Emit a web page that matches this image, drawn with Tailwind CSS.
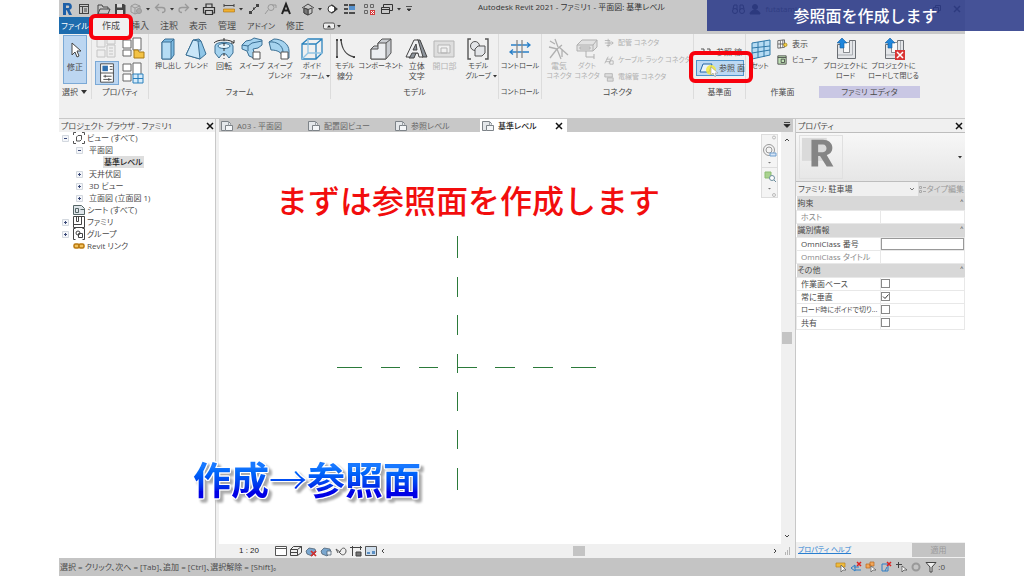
<!DOCTYPE html>
<html lang="ja">
<head>
  <meta charset="UTF-8" />
  <meta name="viewport" content="width=device-width, initial-scale=1.0" />
  <title>Autodesk Revit 2021 - ファミリ1</title>
  <script src="https://cdn.jsdelivr.net/npm/@tailwindcss/browser@4"></script>
</head>
<body class="relative bg-white px-[59px] font-['Open_Sans','Noto_Sans_CJK_JP',sans-serif] [font-feature-settings:'palt'] text-[8px] leading-[10px] text-[#4a4a4a] overflow-x-hidden">

  <!-- shared icons -->
  <svg class="hidden">
    <symbol id="caret" viewBox="0 0 8 8"><path d="M2 3h4L4 5.500z" fill="#333"/></symbol>
    <symbol id="view" viewBox="0 0 12 12"><path d="M4.500 10.500h-4v-9h7l2 2v1" fill="#e4e7ea" stroke="#7d8388"/><path d="M4.500 5.500h7v5h-7z" fill="#f4f6f8" stroke="#7d8388"/><path d="M7.500 1.500v4" fill="none" stroke="#9aa0a5"/></symbol>
    <symbol id="plus" viewBox="0 0 7 7"><path d="M.5.5h6v6h-6z" fill="#f4f6fa" stroke="#d3d8df"/><path d="M2 3.500h3M3.500 2v3" stroke="#3c4a78"/></symbol>
    <symbol id="minus" viewBox="0 0 7 7"><path d="M.5.5h6v6h-6z" fill="#f4f6fa" stroke="#d3d8df"/><path d="M2 3.500h3" stroke="#3c4a78"/></symbol>
    <symbol id="close" viewBox="0 0 8 8"><path d="M1 1l6 6M7 1L1 7" stroke="#111" stroke-width="1.500"/></symbol>
    <symbol id="load" viewBox="0 0 24 24"><path d="M3.500 7.500h6v8h6v-12h6v18h-18z" fill="#e4e6e9" stroke="#6a6e73"/><path d="M9.500 5.500h6v10h-6z" fill="#fafafa" stroke="#8a8e93"/><path d="M18.500 4v14H4" fill="none" stroke="#a9adb2"/><path d="M8 1l5 5h-3v5H6V6H3z" fill="#1f86dc" stroke="#145a9c" stroke-width=".6"/></symbol>
  </svg>

  <div class="flex min-h-screen flex-col bg-[#f0f0f0]">

    <!-- title bar -->
    <header class="relative flex h-[17px] items-center bg-[#c8c8c8]">
      <svg class="size-4" viewBox="0 0 16 16"><path d="M4 2h5.500a3.500 3.500 0 0 1 1 6.800L13 14h-3l-2.200-4.700H7V14H4zM7 4.500v2.500h2a1.200 1.200 0 0 0 0-2.500z" fill="#1d5fa8"/></svg>
      <svg class="ml-px size-4" viewBox="0 0 16 16" fill="none" stroke="#444"><rect x="3.500" y="3.500" width="9" height="9"/><path d="M3.500 5.500h9M6.500 5.500v7M8 8h3M8 10h3"/></svg>
      <svg class="ml-[3px] size-4" viewBox="0 0 16 16" fill="none" stroke="#444"><path d="M3 13V4h4l1 2h5v2M3 13l2-5h10l-2 5z"/></svg>
      <svg class="ml-px size-4" viewBox="0 0 16 16"><path d="M3 3h9l1.500 1.500V13H3z" fill="#444"/><path d="M5 3h5v3.500H5zM5 9h6v4H5z" fill="#ddd"/></svg>
      <svg class="size-4" viewBox="0 0 16 16" fill="none" stroke="#999"><path d="M3 5l4-2 5 2v6l-5 2-4-2zM3 5l4 2 5-2M7 7v6"/><circle cx="11" cy="10" r="2.500" fill="#aaa"/></svg>
      <svg class="size-2"><use href="#caret"/></svg>
      <svg class="size-4" viewBox="0 0 16 16" fill="none" stroke="#999" stroke-width="1.300"><path d="M7 3L3.500 6.500 7 10M4 6.500h6c4 0 4 5 0 5"/></svg>
      <svg class="size-2"><use href="#caret"/></svg>
      <svg class="size-4" viewBox="0 0 16 16" fill="none" stroke="#999" stroke-width="1.300"><path d="M9 3l3.500 3.500L9 10M12 6.500H6c-4 0-4 5 0 5"/></svg>
      <svg class="size-2"><use href="#caret"/></svg>
      <svg class="ml-px size-4" viewBox="0 0 16 16" fill="none" stroke="#333" stroke-width="1.200"><path d="M5 6V3h6v3M4 12H2.500V6.500h11V12H12M4.500 9.500h7v4h-7z"/></svg>
      <svg class="ml-1 size-4" viewBox="0 0 16 16"><path d="M3 4.500h10M3 3v3M13 3v3" stroke="#444" fill="none"/><path d="M2.500 8h11v3h-11z" fill="#f0b030" stroke="#a87010" stroke-width=".6"/></svg>
      <svg class="size-2"><use href="#caret"/></svg>
      <svg class="ml-px size-4" viewBox="0 0 16 16"><path d="M4 12l8-8" stroke="#444" fill="none"/><path d="M3 10h3v3H3zM10 3h3v3h-3zM7 6.500h2v2H7z" fill="#444"/></svg>
      <svg class="size-4" viewBox="0 0 16 16" fill="none" stroke="#999"><path d="M3 13l3-4"/><circle cx="9" cy="6.500" r="3"/><path d="M10 4h4v3"/></svg>
      <svg class="size-4" viewBox="0 0 16 16"><path d="M4 13L8 3l4 10M5.500 9.500h5" stroke="#222" stroke-width="2" fill="none"/></svg>
      <svg class="ml-1.5 size-4" viewBox="0 0 16 16" fill="none" stroke="#444"><path d="M2 7l6-4 6 4M4 7v5l4 2 4-2V7M4 7l4 1.500L12 7M8 8.500V14"/><path d="M4 7l4 1.500V14l-4-2z" fill="#777"/></svg>
      <svg class="size-2"><use href="#caret"/></svg>
      <svg class="size-4" viewBox="0 0 16 16"><circle cx="7.500" cy="8" r="3.500" fill="#fff" stroke="#333"/><path d="M7.500 3L14 8l-6.500 5V11a3 3 0 0 0 0-6z" fill="#333"/></svg>
      <svg class="ml-px size-4" viewBox="0 0 16 16" stroke-width="1.500"><path d="M3 4h4M3 8h4M3 12h4" stroke="#222"/><path d="M8 4h6M8 12h6" stroke="#222"/><path d="M8 8h6M8 6h6" stroke="#2f7fd0"/></svg>
      <svg class="ml-1 size-4" viewBox="0 0 16 16" fill="none" stroke="#666"><path d="M3.500 3.500h3v3h-3zM9.500 3.500h3v3h-3zM3.500 9.500h3v3h-3z"/><path d="M9 9h5v5H9z" fill="#d33b3b" stroke="none"/><path d="M10 10l3 3M13 10l-3 3" stroke="#fff"/></svg>
      <svg class="ml-0.5 size-4" viewBox="0 0 16 16" fill="none" stroke="#333"><path d="M4.500 6V3.500h9v6H11M2.500 6.500h8v6h-8zM2.500 8.500h8"/></svg>
      <svg class="size-2"><use href="#caret"/></svg>
      <svg class="ml-0.5 size-2" viewBox="0 0 8 8"><path d="M1 1.500h6M2 4h4L4 6z" fill="#333" stroke="#333" stroke-width=".8"/></svg>
      <h1 class="ml-[65px] whitespace-nowrap leading-3 pb-1 text-[#333]">Autodesk Revit 2021 - ファミリ1 - 平面図: 基準レベル</h1>
      <div class="absolute right-0 flex items-center gap-1 pr-1 text-[#222]">
        <svg class="h-3 w-8" viewBox="0 0 32 12" fill="none" stroke="#000"><circle cx="6" cy="8" r="2.500"/><circle cx="13" cy="8" r="2.500"/><path d="M4 6l1-4h3v5M15 6l-1-4h-3v5"/><circle cx="26" cy="4" r="2.500" fill="#000"/><path d="M21 11c0-5 10-5 10 0z" fill="#000"/></svg>
        <span>futatami</span>
        <svg class="ml-[132px] size-2" viewBox="0 0 8 8" fill="none" stroke="#000"><path d="M.5 2.500h5v5h-5zM2.500 2V.5h5v5H6"/></svg>
        <svg class="ml-2 size-2"><use href="#close"/></svg>
      </div>
    </header>

    <!-- ribbon tabs -->
    <nav class="flex h-[17px] items-center gap-[11px] bg-[#c8c8c8] whitespace-nowrap text-[9px]">
      <div class="flex h-full items-center">
        <button class="h-full w-8 bg-[#1d6cae] text-[8px] text-white">ファイル</button>
        <button class="relative -mr-[11px] h-full w-10 bg-[#f0f0f0]">作成
          <span class="pointer-events-none absolute -top-[3px] -left-[2px] h-[26px] w-11 rounded-md border-4 border-[#f8000c]"></span>
        </button>
      </div>
      <button>挿入</button>
      <button>注釈</button>
      <button>表示</button>
      <button>管理</button>
      <button class="text-[8px]">アドイン</button>
      <button>修正</button>
      <button class="ml-2 flex items-center" aria-label="リボン表示">
        <svg class="h-2 w-3" viewBox="0 0 12 8"><rect x=".5" y="1" width="11" height="6" rx="1.500" fill="#eee" stroke="#555"/><path d="M4 5.500h4L6 3z" fill="#222"/></svg>
        <svg class="size-2"><use href="#caret"/></svg>
      </button>
    </nav>

    <!-- ribbon -->
    <div class="flex h-[65px] whitespace-nowrap text-center">
      <section class="flex w-[33px] shrink-0 flex-col border-r border-[#dcdcdc]">
        <button class="mx-1 mt-px flex h-[49px] flex-col items-center border border-[#7ba9d6] bg-[#bcd6f1] pt-0.5">
          <svg class="size-6" viewBox="0 0 24 24"><path d="M9 5v12l3-3 2 5 2-1-2-5h4z" fill="#fff" stroke="#444"/></svg>
          <span>修正</span>
        </button>
        <p class="mt-auto mb-px flex h-3 items-center justify-center">選択<svg class="ml-0.5 size-2" viewBox="0 0 8 8"><path d="M1 2h6L4 6z" fill="#333"/></svg></p>
      </section>

      <section class="flex w-[57px] shrink-0 flex-col border-r border-[#dcdcdc]">
        <div class="grid grid-cols-2 justify-items-center gap-y-px px-0.5 pt-0.5">
          <svg class="size-6" viewBox="0 0 24 24" fill="#eee" stroke="#c4c4c4"><path d="M2 3h8v8H2zM12 3h8v5h-8zM2 14h8v7H2z"/><path d="M12 9h8v12h-8zM14 12h4M14 15h4M14 18h4"/></svg>
          <svg class="size-6" viewBox="0 0 24 24" fill="#fff" stroke="#666"><path d="M2 4h8v8H2zM12 2h8v12h-8zM2 14h8v6H2z"/><path d="M13 14h4l1 2h5v6H13z" fill="#f3c244" stroke="#a97a14"/></svg>
          <svg class="size-6 border border-[#7ba9d6] bg-[#bcd6f1]" viewBox="0 0 24 24"><path d="M5 2h14v20H5z" fill="#fff" stroke="#444"/><path d="M7 4h6v6H7z" fill="#2f6fae"/><path d="M15 5h3M15 8h3M5 12h14M8 15.500h9M8 19h9M10 14v3M14 17.500v3" stroke="#444"/></svg>
          <svg class="size-6" viewBox="0 0 24 24" fill="#fff" stroke="#666"><path d="M2 3h8v7H2zM12 2h8v12h-8zM2 13h8v7H2z"/><path d="M12 13h10v9H12zM17 13v9M12 17.500h10" fill="#d5ebfa" stroke="#2a80bd"/></svg>
        </div>
        <p class="mt-auto mb-px h-3 leading-3">プロパティ</p>
      </section>

      <section class="flex w-[182px] shrink-0 flex-col border-r border-[#dcdcdc]">
        <div class="flex pl-[5px] pt-[3px] text-[7px]">
          <button class="flex w-7 flex-col items-center"><svg class="size-6" viewBox="0 0 24 24" stroke="#3a6f94"><path d="M6 5l3-3h9v16l-3 4H6z" fill="#7dbbe3"/><path d="M6 5h9v17H6z" fill="#b5dcf4"/><path d="M15 5l3-3"/></svg>押し出し</button>
          <button class="flex w-7 flex-col items-center"><svg class="size-6" viewBox="0 0 24 24" stroke="#3a6f94"><path d="M9 3l6-1 2 2 5 13-6 5-14-4z" fill="#8fc6e8"/><path d="M9 3l5 1 2 18-14-4z" fill="#c9e6f8"/><path d="M14 4l3 0"/></svg>ブレンド</button>
          <button class="flex w-7 flex-col items-center"><svg class="size-6" viewBox="0 0 24 24" stroke="#3a6f94"><path d="M3 9c0-5 18-5 18 0v7l-4 5-3-4h-4l-3 4-4-5z" fill="#a5d3ef"/><ellipse cx="12" cy="9" rx="6" ry="2.500" fill="#e6f4fc"/><path d="M12 1v21" stroke="#333" stroke-dasharray="3 2"/><path d="M2 6c3-4 17-4 20 0M22 3v3h-3" fill="none" stroke="#333"/></svg><span class="text-[8px]">回転</span></button>
          <button class="flex w-7 flex-col items-center"><svg class="size-6" viewBox="0 0 24 24" stroke="#3a6f94"><path d="M2 8l4-4 5-1 3-2 8 2v5l-4 3-5 1 1 3v6l-5-2-2-5-5-2z" fill="#a5d3ef"/><path d="M2 8l6 1 4-3 10-2M8 9v5" fill="none"/><path d="M13 15h7v7h-7z" fill="#fff" stroke="#555"/></svg>スイープ</button>
          <button class="flex w-7 flex-col items-center"><svg class="size-6" viewBox="0 0 24 24" stroke="#3a6f94"><path d="M1 5l5-3c8 0 15 5 15 12v7h-6C14 15 9 13 3 13z" fill="#a5d3ef"/><path d="M1 5c8-1 14 4 14 10" fill="none"/><path d="M13 15h7v7h-7z" fill="#fff" stroke="#555"/></svg>スイープ<br>ブレンド</button>
          <button class="flex w-9 flex-col items-center"><svg class="size-6" viewBox="0 0 24 24" fill="none" stroke="#2b83bd" stroke-width="1.300"><path d="M2 7h14v15H2zM2 7l6-5h14v14l-6 6M16 7l6-5"/><path d="M8 2v14h14M8 16l-6 6" stroke="#90c4e4"/></svg><span>ボイド</span><span class="flex items-center">フォーム<svg class="-mr-2 size-2"><use href="#caret"/></svg></span></button>
        </div>
        <p class="mt-auto mb-px h-3 leading-3">フォーム</p>
      </section>

      <section class="flex w-[168px] shrink-0 flex-col border-r border-[#dcdcdc]">
        <div class="flex pt-[3px] text-[7px]">
          <button class="flex w-7 flex-col items-center"><svg class="size-6" viewBox="0 0 24 24" fill="none" stroke="#444" stroke-width="1.300"><path d="M4 3v17M8 3c1 9 4 15 13 17"/><path d="M3 2h2v2H3zM3 19h2v2H3zM7 2h2v2H7zM20 19h2v2h-2z" fill="#444" stroke="none"/></svg>モデル<span class="text-[8px]">線分</span></button>
          <button class="flex w-11 flex-col items-center"><svg class="size-6" viewBox="0 0 24 24" stroke="#555"><path d="M2 12l3-3h4V6l4-4h9v14l-5 6H2z" fill="#c9ccd1"/><path d="M2 12h7V6h8v16H2zM17 6l5-4" fill="#eceef1"/></svg>コンポーネント</button>
          <button class="flex w-7 flex-col items-center text-[8px]"><svg class="size-6" viewBox="0 0 24 24" stroke="#444"><path d="M4 21L12 3h3l7 17h-5l-1-4h-5l-2 5z" fill="#8d949c"/><path d="M1 20L9 3h4l5 17h-4l-1-4H7l-2 4zM8 13h4l-1-6z" fill="#f0f1f3"/></svg>立体<br>文字</button>
          <button disabled class="flex w-7 flex-col items-center text-[8px] text-[#b4b4b4]"><svg class="size-6" viewBox="0 0 24 24" stroke="#b5b5b5"><path d="M2 4h20v16H2z" fill="#dedede"/><path d="M6 8h12v8H6zM9 11h6v5H9z" fill="#f0f0f0"/></svg>開口部</button>
          <button class="flex w-10 flex-col items-center"><svg class="size-6" viewBox="0 0 24 24" fill="#e3e5e8" stroke="#555"><path d="M5 2H2v20h3M19 2h3v20h-3" fill="none" stroke-width="1.400"/><circle cx="9" cy="9" r="4.500"/><path d="M9 12l3-3h7v7l-3 3H9z"/></svg><span>モデル</span><span class="flex items-center">グループ<svg class="-mr-2 size-2"><use href="#caret"/></svg></span></button>
        </div>
        <p class="mt-auto mb-px h-3 leading-3">モデル</p>
      </section>

      <section class="flex w-[43px] shrink-0 flex-col items-center border-r border-[#dcdcdc] text-[7px]">
        <button class="flex w-10 flex-col items-center pt-[3px]"><svg class="size-6" viewBox="0 0 24 24" fill="none" stroke="#2a80c8" stroke-width="1.300"><path d="M2 15h19M3 8h19M5 12.500L2 15l3 2.500M19 5.500L22 8l-3 2.500"/><path d="M9 3v18M14 3v18" stroke="#888"/></svg>コントロール</button>
        <p class="mt-auto mb-px h-3 leading-3">コントロール</p>
      </section>

      <section class="flex w-[152px] shrink-0 flex-col border-r border-[#dcdcdc]">
        <div class="flex pl-[3px] pt-[3px] text-[7px] text-[#b0b0b0]">
          <button disabled class="flex w-7 flex-col items-center"><svg class="size-6" viewBox="0 0 24 24" fill="none" stroke="#b0b0b0" stroke-width="1.300"><path d="M3 4l5 3M8 2l3 8M2 10l8 2 5-4M10 12l-7 9M10 12l4 10M12 10l9 8M15 12v8"/></svg><span class="text-[8px]">電気</span>コネクタ</button>
          <button disabled class="flex w-7 flex-col items-center"><svg class="size-6" viewBox="0 0 24 24" fill="#e2e2e2" stroke="#b0b0b0"><path d="M2 8l5-5h15v7l-4 4H2zM2 8h16v6M18 8l4-5M5 10h10v2H5z"/><path d="M11 14v6h8M19 17v5" fill="none"/></svg>ダクト<br>コネクタ</button>
          <div class="flex flex-col gap-[7px] pl-[3px] pt-px">
            <button disabled class="flex items-center gap-1"><svg class="size-2.5" viewBox="0 0 12 12" fill="none" stroke="#b0b0b0"><path d="M1 3h6v6H3M1 6h10M9 4l2 2-2 2M5 1v10"/></svg>配管 コネクタ</button>
            <button disabled class="flex items-center gap-1"><svg class="size-2.5" viewBox="0 0 12 12" fill="none" stroke="#b0b0b0"><path d="M1 10l4-8M6 10l4-8M2 8h5M3 5h5M7 7h4v4H7z"/></svg>ケーブル ラック コネクタ</button>
            <button disabled class="flex items-center gap-1"><svg class="size-2.5" viewBox="0 0 12 12" fill="#ddd" stroke="#b0b0b0"><path d="M1 2h9v4H1zM4 7h7v4H4z"/></svg>電線管 コネクタ</button>
          </div>
        </div>
        <p class="mt-auto mb-px h-3 leading-3">コネクタ</p>
      </section>

      <section class="flex w-[52px] shrink-0 flex-col border-r border-[#dcdcdc]">
        <div class="px-0.5 pt-2.5">
          <button class="flex h-4 items-center gap-1 pl-1"><svg class="size-3" viewBox="0 0 12 12" fill="none" stroke="#555"><path d="M1 3h3v4M7 3h3v4"/></svg>参照 線</button>
          <button class="relative flex h-4 w-12 items-center gap-1 border border-[#4f94cc] bg-[#bcd9f3] pl-0.5">
            <svg class="h-3 w-4" viewBox="0 0 16 12" overflow="visible"><path d="M4 2h9l-3 8H1z" fill="#e8f3fb" stroke="#2467a5"/><circle cx="12" cy="8" r="5" fill="#f5e83c" opacity=".85"/><path d="M12 5v8l2-2 2 4 1-1-1-3h3z" fill="#fff" stroke="#999" stroke-width=".6"/></svg>参照 面
            <span class="pointer-events-none absolute -top-2.5 -left-2 h-8 w-16 rounded-md border-4 border-[#f8000c]"></span>
          </button>
        </div>
        <p class="mt-auto mb-px h-3 leading-3">基準面</p>
      </section>

      <section class="flex w-[73px] shrink-0 flex-col">
        <div class="flex pt-[3px] text-[7px]">
          <button class="flex w-7 flex-col items-center"><svg class="size-6" viewBox="0 0 24 24" fill="#b5dbf3" stroke="#2f78a8"><path d="M4 6l18-3v15L4 22zM10 5v16M16 4v16M4 11l18-2M4 16l18-3"/></svg>セット</button>
          <div class="flex flex-col gap-1.5 pl-0.5 pt-0.5">
            <button class="flex items-center gap-1 text-[8px]"><svg class="h-2.5 w-3" viewBox="0 0 12 12" fill="#fff" stroke="#555"><path d="M1 2l8-1v9l-8 1zM4 2v9M7 1v9M1 6h8"/><circle cx="10" cy="7" r="2" fill="#f4ce42" stroke="#a98918"/></svg>表示</button>
            <button class="flex items-center gap-1"><svg class="h-2.5 w-3" viewBox="0 0 12 12" fill="#bfe0b5" stroke="#444"><path d="M1 1h10v10H1zM1 3h10M5 5h4v4H5z"/></svg>ビューア</button>
          </div>
        </div>
        <p class="mt-auto mb-px h-3 leading-3">作業面</p>
      </section>

      <section class="flex w-[101px] shrink-0 flex-col">
        <div class="flex justify-center pt-[3px] text-[7px]">
          <button class="flex w-12 flex-col items-center"><svg class="size-6"><use href="#load"/></svg>プロジェクトに<br>ロード</button>
          <button class="flex w-12 flex-col items-center"><svg class="size-6" viewBox="0 0 24 24"><use href="#load"/><path d="M13 13h10v10H13z" fill="#d93636"/><path d="M15 15l6 6M21 15l-6 6" stroke="#fff" stroke-width="1.500"/></svg>プロジェクトに<br>ロードして閉じる</button>
        </div>
        <p class="mt-auto mb-px h-3 bg-[#c9c7e4] leading-3">ファミリ エディタ</p>
      </section>
    </div>

    <!-- workspace -->
    <main class="relative mt-[19px] flex flex-1 border-t border-[#c8c8c8]">

      <!-- project browser -->
      <aside class="mr-[3px] flex w-[157px] shrink-0 flex-col border-r border-[#c8c8c8] bg-white">
        <div class="flex h-[13px] items-center justify-between bg-[#f0f0f0] pl-0.5 pr-px">プロジェクト ブラウザ - ファミリ1<svg class="size-2"><use href="#close"/></svg></div>
        <ul class="pl-[3px] leading-3 *:flex *:h-3 *:items-center">
          <li><svg class="size-[7px]"><use href="#minus"/></svg><svg class="mr-0.5 ml-1 size-3" viewBox="0 0 12 12" fill="none" stroke="#555"><path d="M3 .5H.5V3M9 .5h2.500V3M3 11.500H.5V9M9 11.500h2.500V9"/><path d="M3.500 5l1.500-1.500h3.500v4L7 9H3.500z"/></svg>ビュー (すべて)</li>
          <li class="pl-[14px]"><svg class="mr-1.5 size-[7px]"><use href="#minus"/></svg>平面図</li>
          <li class="pl-[41px]"><span class="bg-[#dedede] px-px font-medium text-[#222]">基準レベル</span></li>
          <li class="pl-[14px]"><svg class="mr-1.5 size-[7px]"><use href="#plus"/></svg>天井伏図</li>
          <li class="pl-[14px]"><svg class="mr-1.5 size-[7px]"><use href="#plus"/></svg>3D ビュー</li>
          <li class="pl-[14px]"><svg class="mr-1.5 size-[7px]"><use href="#plus"/></svg>立面図 (立面図 1)</li>
          <li class="pl-[11px]"><svg class="mr-0.5 size-3" viewBox="0 0 12 12" fill="#dfe5ea" stroke="#566"><path d="M.5 1.500h8l3 3v6H.5zM2.500 4.500h3v4h-3zM7.500 5.500h4"/></svg>シート (すべて)</li>
          <li><svg class="size-[7px]"><use href="#plus"/></svg><svg class="mr-0.5 ml-1 size-3" viewBox="0 0 12 12" fill="#fff" stroke="#444"><path d="M.5.5h11v11H.5zM.5 8.500h8v-8M3.500.5v5h2v-5"/></svg>ファミリ</li>
          <li><svg class="size-[7px]"><use href="#plus"/></svg><svg class="mr-0.5 ml-1 size-3" viewBox="0 0 12 12" fill="none" stroke="#444"><path d="M2.500.5h-2v11h2M9.500.5h2v11h-2M5.500 5.500h4v4h-4z"/><circle cx="5" cy="5" r="2"/></svg>グループ</li>
          <li class="pl-[11px]"><svg class="mr-0.5 size-3" viewBox="0 0 12 12" fill="#f1c15c" stroke="#b9780f" stroke-width="1.500"><rect x="1" y="4" width="5" height="4" rx="1.500"/><rect x="6" y="4" width="5" height="4" rx="1.500"/></svg>Revit リンク</li>
        </ul>
      </aside>

      <!-- drawing area -->
      <section class="flex min-w-0 flex-1 flex-col bg-white">
        <div class="flex h-[13px] shrink-0 bg-[#c8c8c8] text-[#666] *:flex *:items-center">
          <button class="w-[87px] gap-1 pl-0.5"><svg class="size-3"><use href="#view"/></svg>A03 - 平面図</button>
          <button class="w-[87px] gap-1 pl-0.5"><svg class="size-3"><use href="#view"/></svg>配置図ビュー</button>
          <button class="w-[87px] gap-1 pl-0.5"><svg class="size-3"><use href="#view"/></svg>参照レベル</button>
          <button class="w-[87px] gap-1 bg-white pl-0.5 pr-1 font-medium text-[#222]"><svg class="size-3"><use href="#view"/></svg>基準レベル<svg class="ml-auto size-2"><use href="#close"/></svg></button>
          <svg class="ml-auto mr-0.5 mt-0.5 size-2" viewBox="0 0 8 8"><path d="M1 1.500h6M1 3.500h6L4 6.500z" fill="#222" stroke="#222" stroke-width=".8"/></svg>
        </div>
        <div class="flex flex-1">
          <div class="relative flex-1">
            <p class="pt-12 pl-[57px] whitespace-nowrap text-[32px] leading-[42px] font-medium text-[#f20d0d] [font-feature-settings:normal]">まずは参照面を作成します</p>
            <svg class="absolute top-[104px] left-[118px] h-[256px] w-[262px]" viewBox="0 0 262 256" stroke="#2b7a3a" fill="none">
              <path d="M120.500 0v22M120.500 41v20M120.500 79v20M120.500 118v19M120.500 156v19M120.500 194v19M120.500 232v22"/>
              <path d="M0 131.500h25M44 131.500h19M82 131.500h19M120 131.500h20M158 131.500h20M196 131.500h20M234 131.500h25"/>
            </svg>
            <div class="absolute top-0.5 right-[3px] flex h-16 w-[17px] flex-col items-center border border-[#ddd] bg-[#f4f4f4]">
              <svg class="h-full w-full" viewBox="0 0 15 62" fill="none" stroke="#bbb"><circle cx="12" cy="2.500" r="1.500"/><circle cx="7" cy="15" r="5.500" stroke="#999"/><circle cx="7" cy="15" r="3" stroke="#999"/><path d="M8 18h6v3H8z" fill="#d7e5f5" stroke="#6f9fd0"/><path d="M6 27h3l-1.500 1.500z" fill="#777" stroke="none"/><path d="M0 32.500h15" stroke="#ddd"/><path d="M3 37h6v6H3z" fill="#a9d28f" stroke="#8bbd72"/><circle cx="10" cy="43" r="2.500" stroke="#6f8f9f" fill="#fff"/><path d="M12 45l2 2" stroke="#6f8f9f"/><path d="M6 53h3l-1.500 1.500z" fill="#777" stroke="none"/><circle cx="12" cy="60" r="1.500"/></svg>
            </div>
          </div>
          <div class="flex w-3 flex-col items-center justify-between bg-[#f0f0f0] py-1">
            <svg class="size-2" viewBox="0 0 8 8" fill="none" stroke="#444"><path d="M2 5l2-2 2 2"/></svg>
            <span class="h-3 w-2.5 bg-[#c4c4c4]"></span>
            <svg class="size-2" viewBox="0 0 8 8" fill="none" stroke="#444"><path d="M2 3l2 2 2-2"/></svg>
          </div>
        </div>
        <div class="flex h-[14px] shrink-0 items-center bg-[#f0f0f0] pl-5">
          <span class="w-9 font-['Liberation_Sans',sans-serif] text-[#222]">1 : 20</span>
          <div class="flex gap-[3px] *:size-3">
            <svg viewBox="0 0 12 12" fill="#fff" stroke="#555"><path d="M.5 1.500h11v9H.5zM.5 3.500h11"/></svg>
            <svg viewBox="0 0 12 12" fill="none" stroke="#444"><path d="M.5 4.500h7v6h-7zM.5 4.500l3-3h8v6l-4 3M7.500 4.500l4-3M.5 7.500h7"/></svg>
            <svg viewBox="0 0 12 12"><path d="M1 6l3-3 6 1 1 3-4 4-5-2z" fill="#7aa7cf" stroke="#456" stroke-width=".7"/><path d="M6 6l5 5M11 6l-5 5" stroke="#d22f2f" stroke-width="1.700"/></svg>
            <svg viewBox="0 0 12 12"><path d="M1 6l3-3 6 1 1 3-4 4-5-2z" fill="#7aa7cf" stroke="#456" stroke-width=".7"/><path d="M7 6h4v4H7z" fill="#e8eef5" stroke="#456" stroke-width=".7"/></svg>
            <svg viewBox="0 0 12 12" fill="none" stroke="#555"><path d="M1 4l4 3c2-6 6-4 6-1S8 11 6 9L4 7M1 4l2 4"/></svg>
            <svg viewBox="0 0 12 12" fill="none" stroke="#444"><path d="M2.500 1v10M0 2.500h12M10.500 1v4"/><path d="M6 7h5v4H6z" fill="#777"/></svg>
            <svg viewBox="0 0 12 12" fill="#cfdeec" stroke="#555"><path d="M.5 1.500h11v9H.5z"/><path d="M2 7h3v2H2zM7 6h3v3H7z" fill="#5b8fc4" stroke="none"/></svg>
          </div>
          <svg class="ml-0.5 size-2" viewBox="0 0 8 8" fill="none" stroke="#444"><path d="M5 2L3 4l2 2"/></svg>
          <span class="mx-auto h-2.5 w-3 bg-[#c4c4c4]"></span>
          <svg class="mr-1 size-2" viewBox="0 0 8 8" fill="none" stroke="#444"><path d="M3 2l2 2-2 2"/></svg>
          <svg class="mr-0.5 size-2" viewBox="0 0 8 8" fill="#b5b5b5"><path d="M6 0h1v8H6zM4 3h1v5H4zM2 5h1v3H2z"/></svg>
        </div>
      </section>

      <!-- properties palette -->
      <aside class="ml-0.5 flex w-[170px] shrink-0 flex-col border-l border-[#c8c8c8] bg-white">
        <div class="flex h-[13px] shrink-0 items-center justify-between bg-[#f0f0f0] px-0.5">プロパティ<svg class="size-2"><use href="#close"/></svg></div>
        <div class="flex h-[50px] items-center justify-between border-y border-[#bdbdbd] bg-linear-to-b from-[#f7f7f7] to-[#e6e6e6] pl-[3px] pr-px">
          <svg class="h-11 w-11 border border-[#e0e0e0]" viewBox="0 0 44 44"><path d="M2 2h26v24H2z" fill="#dadada"/><path d="M12 4h12c12 0 13 14 4 16l7 12h-7l-7-11h-2v11h-7z" fill="#858585"/><path d="M19 9v8h5c5 0 5-8 0-8z" fill="#dadada"/></svg>
          <svg class="size-2"><use href="#caret"/></svg>
        </div>
        <div class="flex h-[14px] items-center bg-[#f0f0f0]">
          <select aria-label="ファミリ" class="flex-1 appearance-none pl-0.5"><option>ファミリ: 駐車場</option></select>
          <svg class="mr-0.5 size-2" viewBox="0 0 8 8" fill="none" stroke="#777"><path d="M2 3l2 2 2-2"/></svg>
          <button class="flex h-full items-center gap-px bg-[#dcdcdc] px-px text-[#999]"><svg class="size-[7px]" viewBox="0 0 7 7" fill="none" stroke="#aaa"><path d="M.5.5h2v2h-2zM4 1.500h3M.5 4.500h2v2h-2zM4 5.500h3"/></svg>タイプ編集</button>
        </div>
        <table class="w-full table-fixed border-collapse text-left [&_td]:border [&_td]:border-[#e8e8e8] [&_td]:p-0 [&_th]:p-0 [&_th]:font-normal">
          <tbody>
            <tr class="h-[14px] bg-[#d8d8d8]"><th colspan="2"><span class="flex justify-between px-px">拘束<span class="text-[6px] leading-[6px]">˄</span></span></th></tr>
            <tr class="h-[13px] text-[#888]"><td><span class="pl-1">ホスト</span></td><td></td></tr>
            <tr class="h-[14px] bg-[#d8d8d8]"><th colspan="2"><span class="flex justify-between px-px">識別情報<span class="text-[6px] leading-[6px]">˄</span></span></th></tr>
            <tr class="h-[13px]"><td><label for="omni" class="pl-1">OmniClass 番号</label></td><td><input id="omni" type="text" class="block h-3 w-full border border-[#999] bg-white" /></td></tr>
            <tr class="h-[13px] text-[#888]"><td><span class="pl-1">OmniClass タイトル</span></td><td></td></tr>
            <tr class="h-[14px] bg-[#d8d8d8]"><th colspan="2"><span class="flex justify-between px-px">その他<span class="text-[6px] leading-[6px]">˄</span></span></th></tr>
            <tr class="h-[13px]"><td><label for="c1" class="pl-1">作業面ベース</label></td><td><input id="c1" type="checkbox" class="block size-[9px] appearance-none border border-[#888]" /></td></tr>
            <tr class="h-[13px]"><td><label for="c2" class="pl-1">常に垂直</label></td><td><span class="relative block size-[9px]"><input id="c2" type="checkbox" checked class="peer block size-[9px] appearance-none border border-[#888]" /><svg class="pointer-events-none absolute inset-0 hidden size-[9px] peer-checked:block" viewBox="0 0 9 9" fill="none" stroke="#333"><path d="M2 4.500l2 2 3.500-4"/></svg></span></td></tr>
            <tr class="h-[13px]"><td><label for="c3" class="pl-1 text-[7px] whitespace-nowrap">ロード時にボイドで切り...</label></td><td><input id="c3" type="checkbox" class="block size-[9px] appearance-none border border-[#888]" /></td></tr>
            <tr class="h-[13px]"><td><label for="c4" class="pl-1">共有</label></td><td><input id="c4" type="checkbox" class="block size-[9px] appearance-none border border-[#888]" /></td></tr>
          </tbody>
        </table>
        <div class="mt-auto flex h-4 items-center justify-between bg-[#f0f0f0] pl-0.5">
          <a href="#" class="text-[7px] text-[#2a7fd0] underline">プロパティ ヘルプ</a>
          <button disabled class="h-3.5 w-[53px] bg-[#c4c4c4] text-[#999]">適用</button>
        </div>
      </aside>

      <!-- caption -->
      <p class="absolute bottom-[54px] left-[134px] bg-linear-to-b from-[#1878ff] from-25% to-[#0000e6] to-75% bg-clip-text whitespace-nowrap text-[38px] leading-[50px] font-bold text-transparent [font-feature-settings:normal] [filter:drop-shadow(1px_0_0_white)_drop-shadow(-1px_0_0_white)_drop-shadow(0_1px_0_white)_drop-shadow(0_-1px_0_white)_drop-shadow(3px_3px_1px_#aaa)]">作成<span class="font-light">→</span>参照面</p>
    </main>

    <!-- status bar -->
    <footer class="flex h-[18px] items-center justify-between bg-[#c4c4c4] pl-px pr-5">
      <span class="whitespace-nowrap">選択 = クリック、次へ = [Tab]、追加 = [Ctrl]、選択解除 = [Shift]。</span>
      <div class="flex items-center gap-[3px] [&>svg]:size-3">
        <svg viewBox="0 0 12 12"><path d="M1 2h9v4H1z" fill="#eebb3c" stroke="#b9831a" stroke-width=".7"/><path d="M6 4v7l2-2h3z" fill="#fff" stroke="#555" stroke-width=".7"/></svg>
        <svg viewBox="0 0 12 12" fill="none"><path d="M1 7l4-3v6zM5 9h6M4 6h5" stroke="#2f7fc6"/><path d="M7 1l4 4M11 1L7 5" stroke="#d22" stroke-width="1.500"/></svg>
        <svg viewBox="0 0 12 12"><path d="M1 3h4v4H1zM5 1h4v4H5z" fill="#f2a75a" stroke="#b7691c" stroke-width=".7"/><path d="M6 5v6l2-2h3z" fill="#fff" stroke="#555" stroke-width=".7"/></svg>
        <svg viewBox="0 0 12 12" fill="none"><path d="M2 3h6v7H2zM5 10l2-4" stroke="#2f7fc6"/><path d="M7 1l4 4M11 1L7 5" stroke="#d22" stroke-width="1.500"/></svg>
        <svg viewBox="0 0 12 12" fill="none" stroke="#444"><path d="M1 3.500h6M3.500 1v6"/><path d="M7 5v6l2-2h3z" fill="#fff" stroke-width=".7"/></svg>
        <svg viewBox="0 0 12 12" fill="none" stroke="#999" stroke-width="2"><circle cx="6" cy="6" r="3.500"/></svg>
        <svg viewBox="0 0 12 12" fill="#eee" stroke="#444"><path d="M1 1.500h10L7 6v5H5V6z"/></svg>
        <span class="-ml-0.5">:0</span>
      </div>
    </footer>
  </div>

  <!-- step banner -->
  <div class="absolute top-0 right-0 flex h-[31px] w-[317px] items-center justify-center bg-[#313f8c]/90 text-base leading-6 font-medium text-white [font-feature-settings:normal]">参照面を作成します</div>

</body>
</html>
